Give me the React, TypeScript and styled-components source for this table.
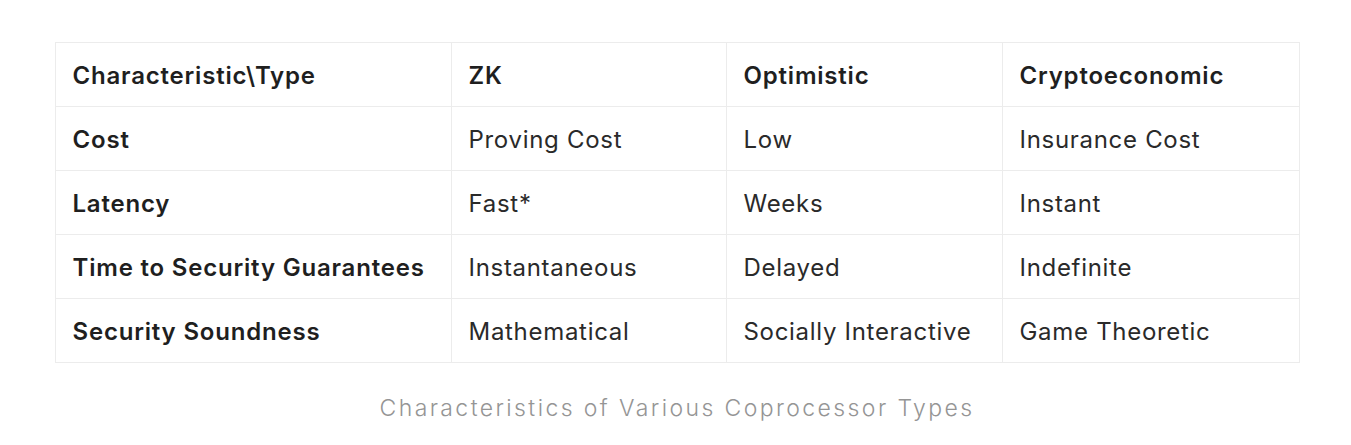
import styled, { createGlobalStyle } from 'styled-components';

const GlobalStyle = createGlobalStyle`
  html, body {
    margin: 0;
    padding: 0;
    background: #ffffff;
  }
  body {
    font-family: Inter, 'Noto Sans', 'Liberation Sans', sans-serif;
    color: #242424;
  }
`;

const Figure = styled.figure`
  margin: 0;
  padding: 42px 52px 0 55px;
  display: flex;
  flex-direction: column;
  align-items: center;
`;

const Table = styled.table`
  width: 1244px;
  border-collapse: collapse;
  table-layout: fixed;
`;

const Cell = styled.td<{ $bold?: boolean }>`
  height: 64px;
  box-sizing: border-box;
  padding: 1px 17px 0;
  border: 1px solid #ececec;
  font-size: 24px;
  letter-spacing: ${(p) => (p.$bold ? '0.8px' : '0.7px')};
  font-weight: ${(p) => (p.$bold ? 600 : 400)};
  color: ${(p) => (p.$bold ? '#1f1f1f' : '#2a2a2a')};
  white-space: nowrap;
  vertical-align: middle;
`;

const Caption = styled.figcaption`
  margin-top: 30px;
  font-size: 23px;
  line-height: 30px;
  letter-spacing: 2.4px;
  font-weight: 300;
  color: #959595;
  text-align: center;
`;

const widths = [396, 275, 276, 297];

const header = ['Characteristic\\Type', 'ZK', 'Optimistic', 'Cryptoeconomic'];

const rows = [
  ['Cost', 'Proving Cost', 'Low', 'Insurance Cost'],
  ['Latency', 'Fast*', 'Weeks', 'Instant'],
  ['Time to Security Guarantees', 'Instantaneous', 'Delayed', 'Indefinite'],
  ['Security Soundness', 'Mathematical', 'Socially Interactive', 'Game Theoretic'],
];

export default function App() {
  return (
    <>
      <GlobalStyle />
      <Figure>
        <Table>
          <colgroup>
            {widths.map((w, i) => (
              <col key={i} style={{ width: w }} />
            ))}
          </colgroup>
          <tbody>
            <tr>
              {header.map((h) => (
                <Cell key={h} $bold>
                  {h}
                </Cell>
              ))}
            </tr>
            {rows.map((row) => (
              <tr key={row[0]}>
                {row.map((c, i) => (
                  <Cell key={i} $bold={i === 0}>
                    {c}
                  </Cell>
                ))}
              </tr>
            ))}
          </tbody>
        </Table>
        <Caption>Characteristics of Various Coprocessor Types</Caption>
      </Figure>
    </>
  );
}
